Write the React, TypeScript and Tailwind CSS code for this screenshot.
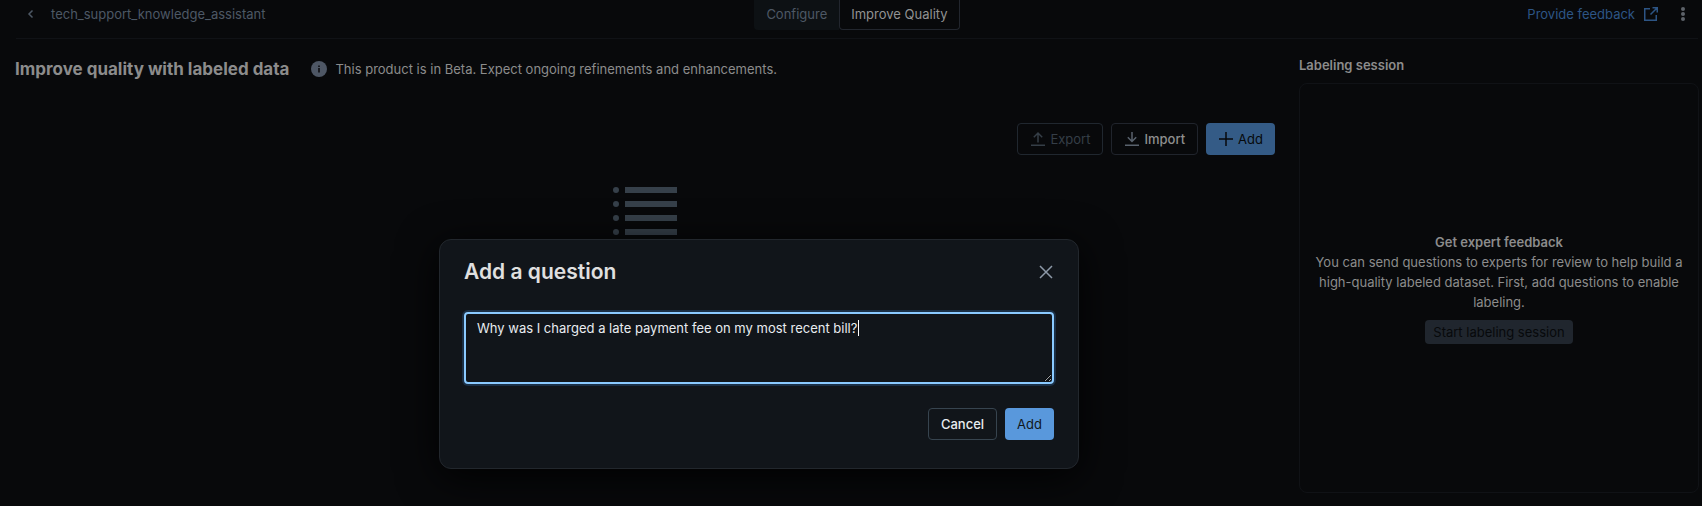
import React, { useState } from "react";

const outlineButton =
  "flex h-8 items-center gap-1 rounded border px-3 text-[13px] leading-5";

function UploadIcon() {
  return (
    <svg width="16" height="16" viewBox="0 0 16 16" fill="none" stroke="currentColor" strokeWidth="1.5" aria-hidden="true">
      <path d="M1 14.25h14M8 11.5V2.2M3.8 6.2 8 2l4.2 4.2" />
    </svg>
  );
}

function DownloadIcon() {
  return (
    <svg width="16" height="16" viewBox="0 0 16 16" fill="none" stroke="currentColor" strokeWidth="1.5" aria-hidden="true">
      <path d="M1 14.25h14M8 1v9.3M3.8 6.3 8 10.5l4.2-4.2" />
    </svg>
  );
}

function PlusIcon() {
  return (
    <svg width="16" height="16" viewBox="0 0 16 16" fill="none" stroke="currentColor" strokeWidth="1.5" aria-hidden="true">
      <path d="M8 1v14M1 8h14" />
    </svg>
  );
}

function ExternalIcon() {
  return (
    <svg width="16" height="16" viewBox="0 0 16 16" fill="none" stroke="currentColor" strokeWidth="1.5" aria-hidden="true">
      <path d="M7 2.75H1.75v11.5h11.5V9M9.5 1.75h4.75V6.5M14 2 7.5 8.5" />
    </svg>
  );
}

function ListIllustration() {
  return (
    <svg width="64" height="48" viewBox="0 0 64 48" fill="#36404a" aria-hidden="true">
      {[0, 14, 28, 42].map((y) => (
        <g key={y}>
          <circle cx="3" cy={y + 3} r="3" />
          <rect x="12" y={y} width="52" height="6" />
        </g>
      ))}
    </svg>
  );
}

function Header() {
  return (
    <header className="ml-4 mr-1 grid h-[39px] grid-cols-[1fr_auto_1fr] items-start border-b border-[#101216]">
      <div className="flex h-7 items-center gap-3 pl-[7px] text-[#4d5865]">
        <button type="button" aria-label="Back" className="flex size-4 items-center justify-center">
          <svg width="16" height="16" viewBox="0 0 16 16" fill="none" stroke="currentColor" strokeWidth="1.5" aria-hidden="true">
            <path d="M9.5 4.5 6 8l3.5 3.5" />
          </svg>
        </button>
        <span>tech_support_knowledge_assistant</span>
      </div>
      <nav className="flex h-[30px]">
        <button type="button" className="h-[30px] rounded-bl bg-[#0d1114] px-3 pb-0.5 text-[#4d5865]">
          Configure
        </button>
        <button
          type="button"
          aria-current="page"
          className="h-[30px] rounded-b border border-t-0 border-[#22262e] px-[11px] pb-0.5 text-[#929292]"
        >
          Improve Quality
        </button>
      </nav>
      <div className="flex h-7 items-center justify-end gap-4 pr-[7px]">
        <a href="#feedback" className="flex items-center gap-2 text-[#2d5585]">
          Provide feedback
          <ExternalIcon />
        </a>
        <button type="button" aria-label="More actions" className="flex size-4 items-center justify-center text-[#5d6269]">
          <svg width="16" height="16" viewBox="0 0 16 16" fill="currentColor" aria-hidden="true">
            <circle cx="8" cy="3" r="2" />
            <circle cx="8" cy="8" r="2" />
            <circle cx="8" cy="13" r="2" />
          </svg>
        </button>
      </div>
    </header>
  );
}

function LabelingPanel() {
  return (
    <aside className="flex w-[400px] shrink-0 flex-col gap-2 pt-4">
      <h2 className="leading-5 font-semibold text-[#8c8c8c]">Labeling session</h2>
      <section className="flex grow flex-col items-center justify-center rounded-lg border border-[#101216] px-3 text-center text-[#8c8c8c]">
        <h3 className="font-semibold">Get expert feedback</h3>
        <p>
          You can send questions to experts for review to help build a high-quality labeled dataset.
          First, add questions to enable labeling.
        </p>
        <button type="button" disabled className="mt-2 h-6 rounded bg-[#20262e] px-2 text-[#07090b]">
          Start labeling session
        </button>
      </section>
    </aside>
  );
}

function AddQuestionDialog() {
  const [question, setQuestion] = useState("Why was I charged a late payment fee on my most recent bill?");
  return (
    <div
      role="dialog"
      aria-modal="true"
      aria-labelledby="dialog-title"
      className="w-[640px] rounded-xl border border-[#22272d] bg-[#11151a] px-6 pt-4 pb-7 shadow-[0_8px_40px_rgba(0,0,0,0.9)]"
    >
      <div className="flex h-8 items-center justify-between">
        <h2 id="dialog-title" className="text-[21px] leading-8 font-semibold text-[#e0e0e0]">
          Add a question
        </h2>
        <button type="button" aria-label="Close" className="flex size-4 items-center justify-center text-[#8d99a8]">
          <svg width="16" height="16" viewBox="0 0 16 16" fill="none" stroke="currentColor" strokeWidth="1.5" aria-hidden="true">
            <path d="m2 2 12 12M14 2 2 14" />
          </svg>
        </button>
      </div>
      <div className="relative mt-6">
        <textarea
          aria-label="Question"
          value={question}
          onChange={(e) => setQuestion(e.target.value)}
          className="block h-[72px] w-full resize rounded border-2 border-[#8acaff] bg-transparent px-[11px] py-1 text-[13px] leading-5 text-[#e8ecf0] caret-transparent shadow-[0_0_0_2px_#1b2f45] outline-none"
        />
        <span aria-hidden="true" className="absolute top-2 left-[394px] h-4 w-px bg-white" />
      </div>
      <div className="mt-6 flex justify-end gap-2">
        <button type="button" className={`${outlineButton} border-[#37444f] font-medium text-[#e8ecf0]`}>
          Cancel
        </button>
        <button type="button" className="h-8 rounded bg-[#5998dc] px-3 text-[#11171c]">
          Add
        </button>
      </div>
    </div>
  );
}

export default function App() {
  return (
    <div className="relative flex min-h-screen flex-col bg-[#08090b] font-['Inter','Liberation_Sans',sans-serif] text-[13px] leading-5">
      <Header />
      <div className="flex grow gap-6 pr-[3px] pb-[13px] pl-[15px]">
        <main className="flex min-w-0 grow flex-col pt-[18px]">
          <div className="flex items-center gap-[22px]">
            <h1 className="text-[17px] leading-6 font-bold text-[#8c8c8c]">Improve quality with labeled data</h1>
            <p className="flex items-center gap-2 text-[#8c8c8c]">
              <svg width="16" height="16" viewBox="0 0 16 16" aria-hidden="true">
                <circle cx="8" cy="8" r="8" fill="#4e5765" />
                <path d="M7.25 4.5h1.5V6h-1.5zM7.25 7h1.5v4.5h-1.5z" fill="#08090b" />
              </svg>
              This product is in Beta. Expect ongoing refinements and enhancements.
            </p>
          </div>
          <div className="mt-[42px] flex justify-end gap-2">
            <button type="button" disabled className={`${outlineButton} border-[#20272f] text-[#353e47]`}>
              <UploadIcon />
              Export
            </button>
            <button type="button" className={`${outlineButton} border-[#20242c] font-medium text-[#8f8f8f]`}>
              <span className="text-[#59626d]">
                <DownloadIcon />
              </span>
              Import
            </button>
            <button type="button" className="flex h-8 items-center gap-1 rounded bg-[#345b86] px-3 text-[#07090b]">
              <PlusIcon />
              Add
            </button>
          </div>
          <div className="mt-8 flex justify-center">
            <ListIllustration />
          </div>
        </main>
        <LabelingPanel />
      </div>
      <div className="absolute inset-0 flex items-start justify-center pt-[239px] pr-[184px]">
        <AddQuestionDialog />
      </div>
    </div>
  );
}
